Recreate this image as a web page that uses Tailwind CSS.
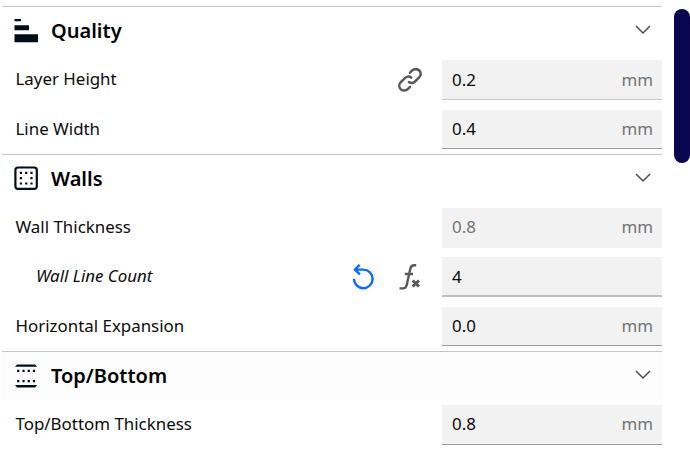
<!DOCTYPE html>
<html lang="en">
<head>
  <meta charset="utf-8">
  <title>Print settings</title>
  <script src="https://cdn.jsdelivr.net/npm/@tailwindcss/browser@4"></script>
</head>
<body class="bg-white overflow-hidden font-['Noto_Sans',sans-serif] text-[16.9px] leading-6 text-[#0b0b0b]">
  <div class="flex h-[453px] w-[690px] justify-between pl-0.5">
    <div class="w-[660px] pt-[6.3px]">

      <!-- Quality -->
      <div class="flex h-[49.25px] items-center border-t border-[#c4c4c4] pl-3 pr-[11px]">
        <svg class="size-6 shrink-0 fill-[#000e1a]" viewBox="0 0 24 24">
          <path d="M.5 0H7v2.3H.5zM.5 6.2H15v5H.5zM.5 15.2H24v8H.5z" />
        </svg>
        <h2 class="ml-[13px] flex-1 text-[20px] font-semibold text-black">Quality</h2>
        <svg class="mb-0.5 h-4 w-4 fill-none stroke-[#4d4d4d]" viewBox="0 0 16 16"><path stroke-width="1.5" d="M1 4 8 11 15 4" /></svg>
      </div>
      <div class="flex h-[49.25px] items-center pl-[13.5px]">
        <label class="flex-1 pb-[1.5px]">Layer Height</label>
        <svg class="mr-5 size-6 fill-none stroke-[#58595b]" viewBox="0 0 24 24" stroke-width="2.5" stroke-linecap="round">
          <path d="M12 4.7 14.3 2.4C16 .8 19.3 .6 21.3 2.5C23.3 4.5 23.1 7.6 21.2 9.4L16.8 13.7C15 15.2 12.4 15.2 10.9 14" />
          <path d="M12 18.8 9.7 21.1C8 22.8 4.7 23.1 2.7 21.2C.7 19.2 .9 16.1 2.8 14.2L7.2 9.9C9 8.4 11.6 8.4 13.1 9.6" />
        </svg>
        <div class="flex h-[39.4px] w-[220px] items-center justify-between border-b border-[#c8c8c8] bg-[#f2f2f2] pl-2.5 pr-[9px]">
          <span>0.2</span>
          <span class="text-[#747474]">mm</span>
        </div>
      </div>
      <div class="flex h-[49.25px] items-center pl-[13.5px]">
        <label class="flex-1 pb-[1.5px]">Line Width</label>
        <div class="flex h-[39.4px] w-[220px] items-center justify-between border-b border-[#9c9c9c] bg-[#f2f2f2] pl-2.5 pr-[9px]">
          <span>0.4</span>
          <span class="text-[#747474]">mm</span>
        </div>
      </div>

      <!-- Walls -->
      <div class="flex h-[49.25px] items-center border-t border-[#c4c4c4] pl-3 pr-[11px]">
        <svg class="mb-0.5 size-6 shrink-0 fill-[#000e1a]" viewBox="0 0 24 24">
          <rect x="1.4" y="1.5" width="21.4" height="21.4" rx="2.6" class="fill-none stroke-[#000e1a]" stroke-width="2.2" />
          <path d="M5.8 5.8h2.2v2.2h-2.2zM11.1 5.8h2.2v2.2h-2.2zM16.4 5.8h2.2v2.2h-2.2zM5.8 11.1h2.2v2.2h-2.2zM16.4 11.1h2.2v2.2h-2.2zM5.8 16.4h2.2v2.2h-2.2zM11.1 16.4h2.2v2.2h-2.2zM16.4 16.4h2.2v2.2h-2.2z" />
        </svg>
        <h2 class="ml-[13px] flex-1 text-[20px] font-semibold text-black">Walls</h2>
        <svg class="mb-0.5 h-4 w-4 fill-none stroke-[#4d4d4d]" viewBox="0 0 16 16"><path stroke-width="1.5" d="M1 4 8 11 15 4" /></svg>
      </div>
      <div class="flex h-[49.25px] items-center pl-[13.5px]">
        <label class="flex-1 pb-[1.5px]">Wall Thickness</label>
        <div class="flex h-[39.4px] w-[220px] items-center justify-between border-b border-[#f2f2f2] bg-[#f2f2f2] pl-2.5 pr-[9px] text-[#747474]">
          <span>0.8</span>
          <span>mm</span>
        </div>
      </div>
      <div class="flex h-[49.25px] items-center pl-[34px]">
        <label class="flex-1 pb-[1.5px] italic">Wall Line Count</label>
        <svg class="mr-[23px] h-[26px] w-6 fill-none stroke-[#0a6cf5]" viewBox="0 0 24 26" stroke-width="2.4">
          <path d="M3 14.8A9.3 9.3 0 1 0 12.3 5.6H4.5" />
          <path d="M8.6 .8 3.9 5.6 9 10.3" />
        </svg>
        <svg class="mr-5 h-[26px] w-6 fill-none stroke-[#58595b]" viewBox="0 0 24 26">
          <path stroke-width="2.4" d="M18.2 1.2H16.2C13.8 1.2 12.8 2.6 12.3 4.7L8.8 20.7C8.2 23.3 7.1 24.4 4.8 24.4H1.5M6.8 10H15" />
          <path stroke-width="3" d="M14.6 16.5 21 22.5M21 16.5 14.6 22.5" />
        </svg>
        <div class="flex h-[39.4px] w-[220px] items-center justify-between border-b-2 border-[#bdbdbd] bg-[#f2f2f2] pl-2.5 pr-[9px] pt-px">
          <span>4</span>
        </div>
      </div>
      <div class="flex h-[49.25px] items-center pl-[13.5px]">
        <label class="flex-1 pb-[1.5px]">Horizontal Expansion</label>
        <div class="flex h-[39.4px] w-[220px] items-center justify-between border-b border-[#9c9c9c] bg-[#f2f2f2] pl-2.5 pr-[9px]">
          <span>0.0</span>
          <span class="text-[#747474]">mm</span>
        </div>
      </div>

      <!-- Top/Bottom -->
      <div class="flex h-[49.25px] items-center border-t border-[#c4c4c4] bg-[#fcfcfc] pl-3 pr-[11px]">
        <svg class="mb-px size-6 shrink-0 fill-[#000e1a]" viewBox="0 0 24 24">
          <path d="M3 .4H21L23.2 2.8H1zM1 21H23.2L21 23.4H3z" />
          <path d="M3.1 5.8h2.2v2.2h-2.2zM8.4 5.8h2.2v2.2h-2.2zM13.7 5.8h2.2v2.2h-2.2zM18.9 5.8h2.2v2.2h-2.2zM3.1 16h2.2v2.2h-2.2zM8.4 16h2.2v2.2h-2.2zM13.7 16h2.2v2.2h-2.2zM18.9 16h2.2v2.2h-2.2z" />
        </svg>
        <h2 class="ml-[13px] flex-1 text-[20px] font-semibold text-black">Top/Bottom</h2>
        <svg class="mb-0.5 h-4 w-4 fill-none stroke-[#4d4d4d]" viewBox="0 0 16 16"><path stroke-width="1.5" d="M1 4 8 11 15 4" /></svg>
      </div>
      <div class="flex h-[49.25px] items-center pl-[13.5px]">
        <label class="flex-1 pb-[1.5px]">Top/Bottom Thickness</label>
        <div class="flex h-[39.4px] w-[220px] items-center justify-between border-b border-[#9c9c9c] bg-[#f2f2f2] pl-2.5 pr-[9px]">
          <span>0.8</span>
          <span class="text-[#747474]">mm</span>
        </div>
      </div>
    </div>

    <!-- scrollbar thumb -->
    <div class="mt-[9px] h-[154px] w-4 rounded-full bg-[#08064e]"></div>
  </div>
</body>
</html>
